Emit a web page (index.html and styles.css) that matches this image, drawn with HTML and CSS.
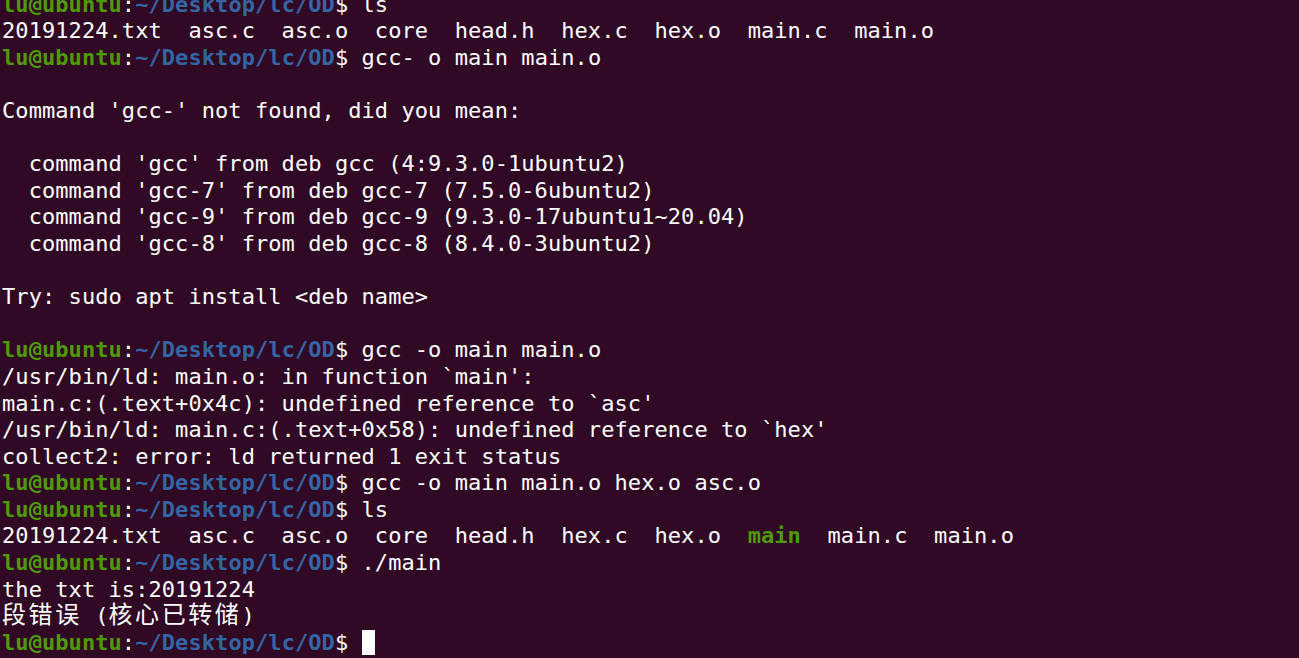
FILE: index.html
```html
<!DOCTYPE html>
<html lang="zh-CN">
<head>
    <meta charset="UTF-8">
    <title>Terminal</title>
    <link rel="stylesheet" href="styles.css">
</head>
<body>
    <div class="terminal">
<pre class="output"><span class="user">lu@ubuntu</span>:<span class="path">~/Desktop/lc/OD</span>$ ls
20191224.txt  asc.c  asc.o  core  head.h  hex.c  hex.o  main.c  main.o
<span class="user">lu@ubuntu</span>:<span class="path">~/Desktop/lc/OD</span>$ gcc- o main main.o

Command 'gcc-' not found, did you mean:

  command 'gcc' from deb gcc (4:9.3.0-1ubuntu2)
  command 'gcc-7' from deb gcc-7 (7.5.0-6ubuntu2)
  command 'gcc-9' from deb gcc-9 (9.3.0-17ubuntu1~20.04)
  command 'gcc-8' from deb gcc-8 (8.4.0-3ubuntu2)

Try: sudo apt install &lt;deb name&gt;

<span class="user">lu@ubuntu</span>:<span class="path">~/Desktop/lc/OD</span>$ gcc -o main main.o
/usr/bin/ld: main.o: in function `main':
main.c:(.text+0x4c): undefined reference to `asc'
/usr/bin/ld: main.c:(.text+0x58): undefined reference to `hex'
collect2: error: ld returned 1 exit status
<span class="user">lu@ubuntu</span>:<span class="path">~/Desktop/lc/OD</span>$ gcc -o main main.o hex.o asc.o
<span class="user">lu@ubuntu</span>:<span class="path">~/Desktop/lc/OD</span>$ ls
20191224.txt  asc.c  asc.o  core  head.h  hex.c  hex.o  <span class="exec">main</span>  main.c  main.o
<span class="user">lu@ubuntu</span>:<span class="path">~/Desktop/lc/OD</span>$ ./main
the txt is:20191224
<span class="cjk">段错误</span> (<span class="cjk">核心已转储</span>)
<span class="user">lu@ubuntu</span>:<span class="path">~/Desktop/lc/OD</span>$ <span class="cursor"> </span></pre>
    </div>
</body>
</html>
```

FILE: styles.css
```css
html, body {
    margin: 0;
    height: 100%;
    background: #300a24;
    overflow: hidden;
}

.terminal {
    padding-left: 2px;
}

.output {
    margin: -8.4px 0 0 0;
    font-family: "DejaVu Sans Mono", monospace;
    font-size: 22px;
    letter-spacing: 0.07px;
    line-height: 26.6px;
    color: #ffffff;
}

.user {
    color: #4e9a06;
    font-weight: bold;
}

.path {
    color: #3465a4;
    font-weight: bold;
}

.exec {
    color: #4e9a06;
    font-weight: bold;
}

.cjk {
    font-family: "Noto Sans CJK SC", sans-serif;
    font-size: 24px;
    line-height: 20px;
    letter-spacing: 2.6px;
}

.cursor {
    background: #ffffff;
}
```
